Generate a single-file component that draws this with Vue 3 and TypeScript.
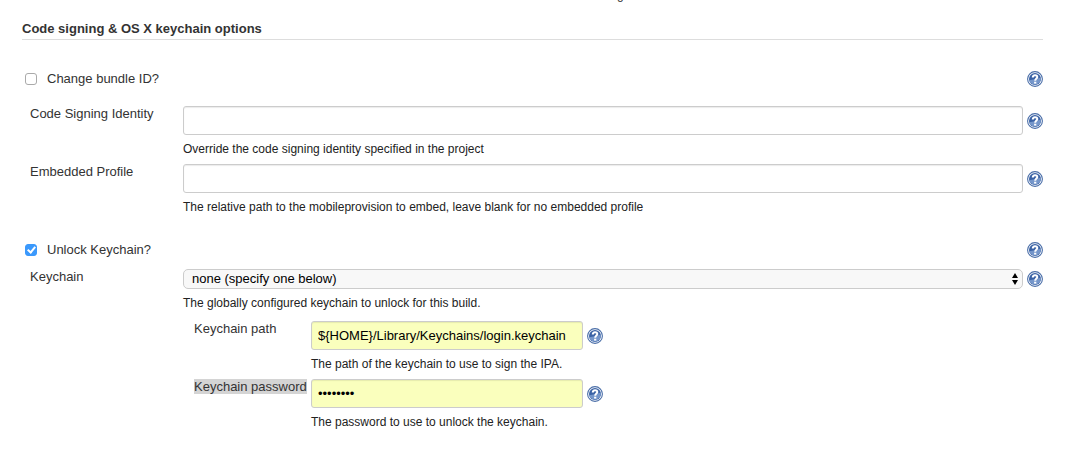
<script setup lang="ts">
import { h, ref } from 'vue'

const changeBundle = ref(false)
const unlockKeychain = ref(true)
const identity = ref('')
const profile = ref('')
const keychain = ref('none')
const keychainPath = ref('${HOME}/Library/Keychains/login.keychain')
const keychainPassword = ref('password')

const HelpButton = (props: { topic: string }) =>
  h('button', { type: 'button', class: 'help', 'aria-label': `Help for ${props.topic}` }, [
    h('svg', { viewBox: '0 0 16 16', width: 16, height: 16, 'aria-hidden': 'true' }, [
      h('circle', { cx: 8, cy: 8, r: 7.4, fill: '#fff', stroke: '#4a6ea8', 'stroke-width': 1.1 }),
      h('circle', { cx: 8, cy: 8, r: 6, fill: '#3a62a5' }),
      h('path', { d: 'M2.1 9.2 Q8 9 13.8 6.6 A6 6 0 0 1 2.1 9.2Z', fill: '#7596ca' }),
      h('path', {
        d: 'M5.8 6.4 C5.8 3.5 10.3 3.5 10.3 6 C10.3 7.6 8.2 7.6 8.2 9.7',
        fill: 'none',
        stroke: '#fff',
        'stroke-width': 2,
      }),
      h('rect', { x: 7.1, y: 10.7, width: 2.2, height: 1.9, fill: '#fff' }),
    ]),
  ])
HelpButton.props = ['topic']
</script>

<template>
  <div class="page">
    <div class="previous" aria-hidden="true"><span>g</span></div>
    <form class="section" @submit.prevent>
      <h2>Code signing &amp; OS X keychain options</h2>

      <div class="toggle first">
        <input id="bundle" v-model="changeBundle" type="checkbox" />
        <label for="bundle">Change bundle ID?</label>
        <HelpButton topic="Change bundle ID" />
      </div>

      <div class="row">
        <label for="identity">Code Signing Identity</label>
        <div class="field">
          <div class="control">
            <input id="identity" v-model="identity" class="text" type="text" />
            <HelpButton topic="Code Signing Identity" />
          </div>
          <p>Override the code signing identity specified in the project</p>
        </div>
      </div>

      <div class="row">
        <label for="profile">Embedded Profile</label>
        <div class="field">
          <div class="control">
            <input id="profile" v-model="profile" class="text" type="text" />
            <HelpButton topic="Embedded Profile" />
          </div>
          <p>The relative path to the mobileprovision to embed, leave blank for no embedded profile</p>
        </div>
      </div>

      <div class="toggle second">
        <input id="unlock" v-model="unlockKeychain" type="checkbox" />
        <label for="unlock">Unlock Keychain?</label>
        <HelpButton topic="Unlock Keychain" />
      </div>

      <div class="row">
        <label for="keychain">Keychain</label>
        <div class="field">
          <div class="control">
            <div class="select">
              <select id="keychain" v-model="keychain">
                <option value="none">none (specify one below)</option>
              </select>
              <svg class="arrows" viewBox="0 0 6 12" width="6" height="12" aria-hidden="true">
                <path d="M3 0 L6 5 H0Z M0 7 H6 L3 12Z" />
              </svg>
            </div>
            <HelpButton topic="Keychain" />
          </div>
          <p>The globally configured keychain to unlock for this build.</p>

          <div class="nested">
            <div class="row">
              <label for="path">Keychain path</label>
              <div class="field">
                <div class="control">
                  <input id="path" v-model="keychainPath" class="text filled" type="text" />
                  <HelpButton topic="Keychain path" />
                </div>
                <p>The path of the keychain to use to sign the IPA.</p>
              </div>
            </div>
            <div class="row">
              <label for="password"><span class="selected">Keychain password</span></label>
              <div class="field">
                <div class="control">
                  <input id="password" v-model="keychainPassword" class="text filled" type="password" />
                  <HelpButton topic="Keychain password" />
                </div>
                <p>The password to use to unlock the keychain.</p>
              </div>
            </div>
          </div>
        </div>
      </div>
    </form>
  </div>
</template>

<style>
body {
  background: #fff;
}
</style>

<style scoped>
.page {
  font: 13px/16px "Liberation Sans", Arial, Helvetica, sans-serif;
  color: #333;
}
.previous {
  display: flex;
  align-items: flex-end;
  height: 2px;
  padding-left: 617px;
  overflow: hidden;
}
.previous span {
  font-size: 12px;
  line-height: 14px;
}
.section {
  padding: 19px 28px 20px 22px;
}
h2 {
  margin: 0;
  padding-bottom: 2px;
  border-bottom: 1px solid #ddd;
  font-size: 13px;
  line-height: 16px;
}
.toggle {
  display: flex;
  align-items: center;
  padding-left: 3px;
}
.toggle.first {
  margin: 31px 0 19px;
}
.toggle.second {
  margin: 20px 0 11px;
}
.toggle label {
  flex: 1;
  padding-left: 10px;
}
input[type="checkbox"] {
  appearance: none;
  box-sizing: border-box;
  width: 12px;
  height: 12px;
  margin: 0;
  border: 1px solid #aaa;
  border-radius: 3px;
  background: #fff;
}
input[type="checkbox"]:checked {
  border-color: #3b99fc;
  background: #3b99fc;
  display: grid;
  place-items: center;
}
input[type="checkbox"]:checked::after {
  content: "";
  box-sizing: border-box;
  width: 5px;
  height: 8px;
  border: solid #fff;
  border-width: 0 2px 2px 0;
  transform: translateY(-1px) rotate(40deg);
}
.row {
  display: grid;
  grid-template-columns: 153px 1fr;
  padding-left: 8px;
}
.control {
  display: flex;
  align-items: center;
  gap: 4px;
}
.text {
  box-sizing: border-box;
  flex: 1;
  min-width: 0;
  height: 29px;
  margin: 0;
  padding: 0 6px;
  border: 1px solid #ccc;
  border-radius: 3px;
  box-shadow: inset 0 1px 1px rgba(0, 0, 0, 0.08);
  background: #fff;
  color: #000;
  font: inherit;
}
.filled {
  flex: 0 1 272px;
  background: #faffbd;
}
.select {
  position: relative;
  flex: 1;
}
select {
  appearance: none;
  display: block;
  box-sizing: border-box;
  width: 100%;
  height: 20px;
  margin: 0;
  padding: 0 20px 0 8px;
  border: 1px solid #ccc;
  border-radius: 5px;
  background: #f8f8f8;
  color: #000;
  font: inherit;
}
.arrows {
  position: absolute;
  top: 4px;
  right: 5px;
  pointer-events: none;
}
p {
  margin: 6px 0 7px;
  font-size: 12px;
  line-height: 16px;
  color: #222;
}
.nested {
  padding: 3px 0 0 3px;
}
.nested .row {
  grid-template-columns: 117px 1fr;
}
.selected {
  background: #d4d4d4;
}
:deep(.help) {
  display: block;
  flex: none;
  width: 16px;
  height: 16px;
  margin: 0;
  padding: 0;
  border: 0;
  background: none;
}
:deep(.help svg) {
  display: block;
}
</style>
